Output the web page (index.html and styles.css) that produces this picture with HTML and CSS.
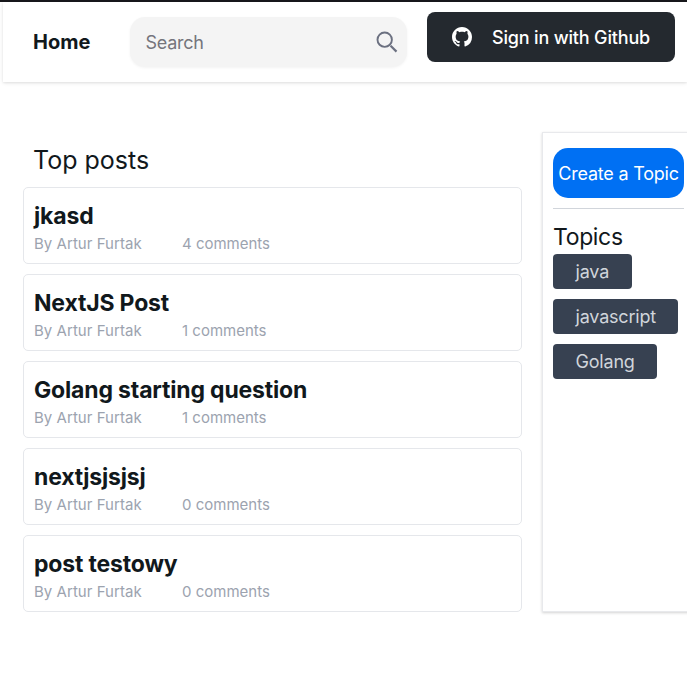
FILE: index.html
```html
<!DOCTYPE html>
<html lang="en">
<head>
<meta charset="utf-8">
<title>Top posts</title>
<link rel="stylesheet" href="styles.css">
</head>
<body>
<header class="nav">
  <a class="home">Home</a>
  <div class="search">
    <span>Search</span>
    <svg class="search-icon" viewBox="0 0 22 22" fill="none" stroke="#6b7080"><circle cx="8.7" cy="8.7" r="7.2" stroke-width="1.9"/><path d="M14.6 14.8L20.5 20.6" stroke-width="2.2"/></svg>
  </div>
  <a class="signin">
    <svg class="github" viewBox="0 0 16 16" fill="#fff"><path d="M8 0C3.58 0 0 3.58 0 8c0 3.54 2.29 6.53 5.47 7.59.4.07.55-.17.55-.38 0-.19-.01-.82-.01-1.49-2.01.37-2.53-.49-2.69-.94-.09-.23-.48-.94-.82-1.13-.28-.15-.68-.52-.01-.53.63-.01 1.08.58 1.23.82.72 1.21 1.87.87 2.33.66.07-.52.28-.87.51-1.07-1.78-.2-3.64-.89-3.64-3.95 0-.87.31-1.59.82-2.15-.08-.2-.36-1.02.08-2.12 0 0 .67-.21 2.2.82.64-.18 1.32-.27 2-.27s1.36.09 2 .27c1.53-1.04 2.2-.82 2.2-.82.44 1.1.16 1.92.08 2.12.51.56.82 1.27.82 2.15 0 3.07-1.87 3.75-3.65 3.95.29.25.54.73.54 1.48 0 1.07-.01 1.93-.01 2.2 0 .21.15.46.55.38A8.01 8.01 0 0 0 16 8c0-4.42-3.58-8-8-8z"/></svg>
    <span>Sign in with Github</span>
  </a>
</header>
<main class="layout">
  <section class="posts">
    <h1 class="heading">Top posts</h1>
    <article class="post"><h2>jkasd</h2><p><span class="author">By Artur Furtak</span><span>4 comments</span></p></article>
    <article class="post"><h2>NextJS Post</h2><p><span class="author">By Artur Furtak</span><span>1 comments</span></p></article>
    <article class="post"><h2>Golang starting question</h2><p><span class="author">By Artur Furtak</span><span>1 comments</span></p></article>
    <article class="post"><h2>nextjsjsjsj</h2><p><span class="author">By Artur Furtak</span><span>0 comments</span></p></article>
    <article class="post"><h2>post testowy</h2><p><span class="author">By Artur Furtak</span><span>0 comments</span></p></article>
  </section>
  <aside class="side">
    <a class="create">Create a Topic</a>
    <hr>
    <h2 class="topics-title">Topics</h2>
    <div class="topics"><a>java</a><a>javascript</a><a>Golang</a></div>
  </aside>
</main>
</body>
</html>
```
FILE: styles.css
```css
* { box-sizing: border-box; }
html { overflow: hidden; }
body {
  margin: 0;
  border-top: 2px solid #17171b;
  height: 687px;
  overflow: hidden;
  background: #fff;
  color: #11181c;
  font-family: Inter, sans-serif;
}
h1, h2, p { margin: 0; }
.nav {
  display: flex;
  align-items: flex-start;
  height: 80px;
  margin-left: 3px;
  padding: 10px 12px 0 30px;
  box-shadow: 0 1px 4px rgba(0,0,0,.1), 0 1px 2px rgba(0,0,0,.05);
}
.home {
  width: 97px;
  font-size: 20px;
  line-height: 60px;
  font-weight: 700;
}
.search {
  display: flex;
  align-items: center;
  justify-content: space-between;
  width: 277px;
  height: 50px;
  margin: 5px 20px 0 0;
  padding: 0 9px 0 15.5px;
  border-radius: 15px;
  background: #f4f4f4;
  box-shadow: 0 1px 3px rgba(0,0,0,.05);
  color: #75757c;
  font-size: 18px;
  letter-spacing: -.25px;
}
.search-icon { width: 22px; height: 22px; }
.signin {
  display: flex;
  align-items: center;
  width: 248px;
  height: 50px;
  padding-left: 25px;
  border-radius: 8px;
  background: #24292f;
  color: #fff;
  font-size: 18px;
  font-weight: 500;
  letter-spacing: -.17px;
  white-space: nowrap;
}
.github { width: 20px; height: 20px; margin-right: 20px; }
.layout {
  display: flex;
  align-items: flex-start;
  margin: 50px 0 0 23px;
}
.posts { width: 499px; flex: none; }
.heading {
  height: 55px;
  padding: 10px 0 0 10px;
  font-size: 25px;
  line-height: 36px;
  font-weight: 400;
}
.post {
  height: 77px;
  margin-bottom: 10px;
  padding: 10px;
  border: 1px solid #e5e7eb;
  border-radius: 5px;
}
.post h2 {
  font-size: 23px;
  line-height: 36px;
  font-weight: 700;
  letter-spacing: -.17px;
  white-space: nowrap;
}
.post p {
  display: flex;
  color: #9ca3af;
  font-size: 15px;
  line-height: 20px;
}
.author { width: 148px; letter-spacing: .04px; }
.side {
  flex: none;
  width: 154px;
  height: 480px;
  margin-left: 20px;
  padding: 15px 10px;
  border: 1px solid #e8e9ec;
  box-shadow: 0 1px 3px rgba(0,0,0,.12), 0 1px 2px rgba(0,0,0,.06);
}
.create {
  display: block;
  width: 131px;
  height: 50px;
  border-radius: 15px;
  background: #0070f3;
  color: #fff;
  font-size: 18px;
  line-height: 51px;
  letter-spacing: -.22px;
  text-align: center;
  white-space: nowrap;
}
hr { width: 131px; margin: 10px 0; border: 0; border-top: 1px solid #d1d5db; }
.topics-title {
  height: 35px;
  font-size: 23px;
  line-height: 37px;
  font-weight: 400;
  letter-spacing: -.35px;
}
.topics {
  display: flex;
  flex-direction: column;
  align-items: flex-start;
  gap: 10px;
}
.topics a {
  height: 35px;
  padding: 0 22.5px;
  border-radius: 4px;
  background: #374151;
  color: #d1d5db;
  font-size: 18px;
  line-height: 35px;
  letter-spacing: -.2px;
}
```
